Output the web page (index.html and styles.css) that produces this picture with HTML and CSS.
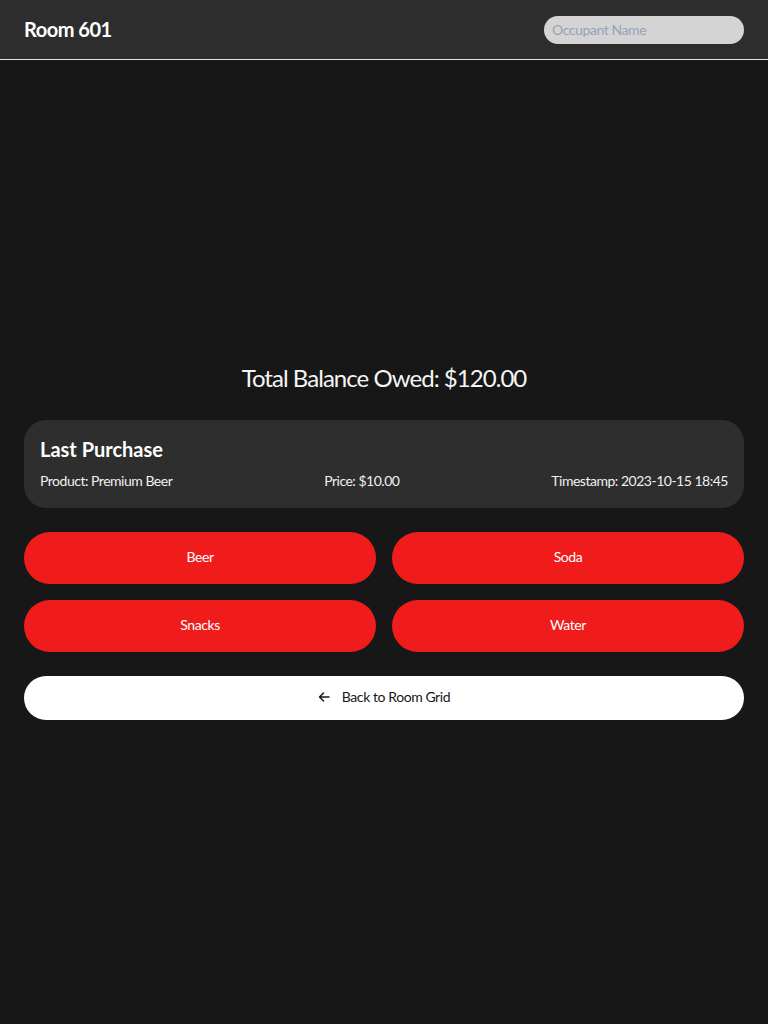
FILE: index.html
```html
<!DOCTYPE html>
<html lang="en">
<head>
<meta charset="utf-8">
<title>Room 601</title>
<link rel="stylesheet" href="styles.css">
</head>
<body>
<header class="topbar">
  <h1 class="room-title">Room 601</h1>
  <input class="occupant" type="text" placeholder="Occupant Name">
</header>
<main class="main">
  <div class="content">
    <p class="balance">Total Balance Owed: $120.00</p>
    <section class="card">
      <h2 class="card-title">Last Purchase</h2>
      <div class="card-row">
        <span>Product: Premium Beer</span>
        <span>Price: $10.00</span>
        <span>Timestamp: 2023-10-15 18:45</span>
      </div>
    </section>
    <div class="products">
      <button class="product">Beer</button>
      <button class="product">Soda</button>
      <button class="product">Snacks</button>
      <button class="product">Water</button>
    </div>
    <button class="back">
      <svg class="back-icon" width="12" height="12" viewBox="0 0 12 12" aria-hidden="true"><path d="M11 6H1.5M5.5 2L1.5 6l4 4" fill="none" stroke="#171717" stroke-width="1.5" stroke-linecap="round" stroke-linejoin="round"/></svg>
      <span>Back to Room Grid</span>
    </button>
  </div>
</main>
</body>
</html>
```
FILE: styles.css
```css
* { box-sizing: border-box; }
html, body { margin: 0; padding: 0; }
body {
  background: #171717;
  color: #f5f5f5;
  font-family: "Lato", "Noto Sans", sans-serif;
  min-height: 1024px;
  display: flex;
  flex-direction: column;
}
.topbar {
  height: 60px;
  background: #2d2d2d;
  border-bottom: 1px solid #e5e5e5;
  display: flex;
  align-items: center;
  justify-content: space-between;
  padding: 0 24px;
}
.room-title {
  margin: 0 0 2px;
  font-size: 20px;
  font-weight: 700;
  letter-spacing: -0.025em;
  color: #ffffff;
}
.occupant {
  width: 200px;
  height: 28px;
  border: none;
  border-radius: 14px;
  background: #d4d4d4;
  padding: 0 8px 1px;
  font-family: inherit;
  font-size: 14px;
  letter-spacing: -0.03em;
  color: #171717;
  outline: none;
}
.occupant::placeholder { color: #94a3b8; }
.main {
  flex: 1;
  display: flex;
  flex-direction: column;
  justify-content: center;
  padding: 0 24px;
}
.content { display: flex; flex-direction: column; }
.balance {
  margin: 0 0 26px;
  padding-bottom: 2px;
  font-size: 24px;
  line-height: 28px;
  letter-spacing: -0.04em;
  text-align: center;
  color: #f5f5f5;
}
.card {
  background: #2e2e2e;
  border-radius: 22px;
  padding: 15px 16px 17px;
  margin-bottom: 24px;
}
.card-title {
  margin: 0 0 8px;
  font-size: 20px;
  line-height: 28px;
  font-weight: 700;
  color: #ffffff;
}
.card-row {
  display: flex;
  justify-content: space-between;
  font-size: 14px;
  line-height: 20px;
  letter-spacing: -0.035em;
  color: #f0f0f0;
}
.products {
  display: grid;
  grid-template-columns: 1fr 1fr;
  gap: 16px;
  margin-bottom: 24px;
}
.product {
  height: 52px;
  border: none;
  border-radius: 26px;
  background: #f01c1c;
  color: #ffffff;
  font-family: inherit;
  font-size: 14px;
  letter-spacing: -0.03em;
  padding: 0 0 3px;
}
.back {
  height: 44px;
  border: none;
  border-radius: 22px;
  background: #ffffff;
  color: #171717;
  font-family: inherit;
  font-size: 14px;
  letter-spacing: -0.03em;
  display: flex;
  align-items: center;
  justify-content: center;
  gap: 12px;
  padding: 0 0 3px;
}
.back-icon { display: block; }
```
